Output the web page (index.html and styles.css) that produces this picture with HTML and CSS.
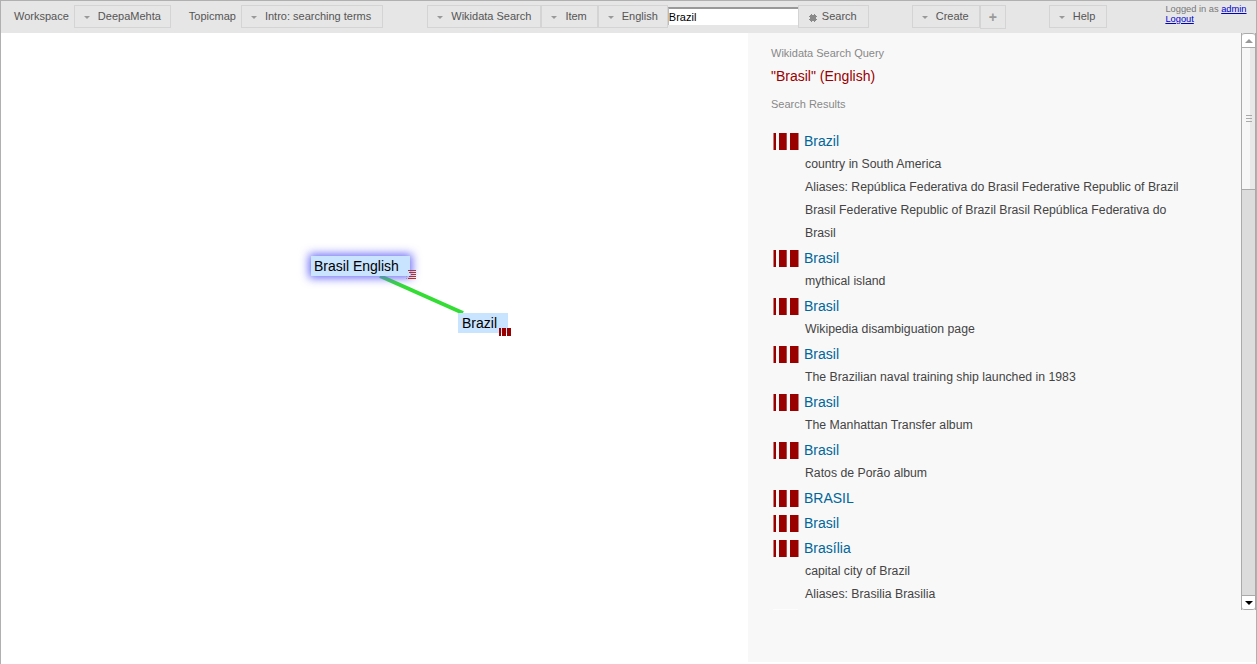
FILE: index.html
```html
<!DOCTYPE html>
<html lang="en">
<head>
  <meta charset="UTF-8">
  <title>DeepaMehta</title>
  <link rel="stylesheet" href="styles.css">
</head>
<body>
  <div class="toolbar">
    <span class="label">Workspace</span>
    <button class="btn menu"><i class="arrow"></i>DeepaMehta</button>
    <span class="label topicmap-label">Topicmap</span>
    <button class="btn menu topicmap-btn"><i class="arrow"></i>Intro: searching terms</button>

    <div class="group search-group">
      <button class="btn menu"><i class="arrow"></i>Wikidata Search</button>
      <button class="btn menu wide"><i class="arrow"></i>Item</button>
      <button class="btn menu"><i class="arrow"></i>English</button>
      <input class="search-input" type="text" value="Brazil">
      <button class="btn search-btn">
        <svg class="gear" viewBox="0 0 8 8"><path d="M2 0h1v1h2V0h1v1h1v1h1v1H7v2h1v1H7v1H6v1H5V7H3v1H2V7H1V6H0V5h1V3H0V2h1V1h1z" fill="#8a8a8a"/></svg>Search
      </button>
    </div>

    <div class="group create-group">
      <button class="btn menu wide"><i class="arrow"></i>Create</button>
      <button class="btn plus">+</button>
    </div>

    <button class="btn menu help-btn"><i class="arrow"></i>Help</button>

    <div class="login">
      <div>Logged in as <a href="#">admin</a></div>
      <div><a href="#">Logout</a></div>
    </div>
  </div>

  <div class="main">
    <div class="canvas">
      <svg class="edges" width="748" height="629"><line x1="380" y1="243" x2="463" y2="280" stroke="#33dd33" stroke-width="4"/></svg>

      <div class="topic selected topic-search">Brasil English</div>
      <svg class="topic-icon flag-icon" viewBox="0 0 11 10">
        <path d="M1 8.5h1M1 6.5h1" stroke="#a99" fill="none"/>
        <path d="M3 .5h8M4 2.5h7M6 4.5h5M4 6.5h7M3 8.5h8" stroke="#b03030" fill="none"/>
      </svg>

      <div class="topic topic-item">Brazil</div>
      <svg class="topic-icon bars-small" viewBox="0 0 12 8"><path d="M0 0h2v8H0zM3 0h4v8H3zM8 0h4v8H8z" fill="#990000"/></svg>
    </div>

    <div class="panel">
      <div class="scroll-box">
        <div class="content">
          <div class="field-label">Wikidata Search Query</div>
          <div class="query-title">"Brasil" (English)</div>
          <div class="field-label results-label">Search Results</div>

          <div class="results">
            <div class="result">
              <div class="result-title"><svg class="bars"><use href="#bars"/></svg><a href="#">Brazil</a></div>
              <div class="result-text">country in South America</div>
              <div class="result-text">Aliases: República Federativa do Brasil Federative Republic of Brazil</div>
              <div class="result-text">Brasil Federative Republic of Brazil Brasil República Federativa do</div>
              <div class="result-text">Brasil</div>
            </div>
            <div class="result">
              <div class="result-title"><svg class="bars"><use href="#bars"/></svg><a href="#">Brasil</a></div>
              <div class="result-text">mythical island</div>
            </div>
            <div class="result">
              <div class="result-title"><svg class="bars"><use href="#bars"/></svg><a href="#">Brasil</a></div>
              <div class="result-text">Wikipedia disambiguation page</div>
            </div>
            <div class="result">
              <div class="result-title"><svg class="bars"><use href="#bars"/></svg><a href="#">Brasil</a></div>
              <div class="result-text">The Brazilian naval training ship launched in 1983</div>
            </div>
            <div class="result">
              <div class="result-title"><svg class="bars"><use href="#bars"/></svg><a href="#">Brasil</a></div>
              <div class="result-text">The Manhattan Transfer album</div>
            </div>
            <div class="result">
              <div class="result-title"><svg class="bars"><use href="#bars"/></svg><a href="#">Brasil</a></div>
              <div class="result-text">Ratos de Porão album</div>
            </div>
            <div class="result">
              <div class="result-title"><svg class="bars"><use href="#bars"/></svg><a href="#">BRASIL</a></div>
            </div>
            <div class="result">
              <div class="result-title"><svg class="bars"><use href="#bars"/></svg><a href="#">Brasil</a></div>
            </div>
            <div class="result">
              <div class="result-title"><svg class="bars"><use href="#bars"/></svg><a href="#">Brasília</a></div>
              <div class="result-text">capital city of Brazil</div>
              <div class="result-text">Aliases: Brasilia Brasilia</div>
            </div>
            <div class="cut-line"></div>
          </div>
        </div>

        <div class="scrollbar">
          <div class="sb-btn sb-btn-top"><i class="sb-up"></i></div>
          <div class="sb-thumb"><i></i><i></i><i></i></div>
          <div class="sb-track"></div>
          <div class="sb-btn sb-btn-bottom"><i class="sb-down"></i></div>
        </div>
      </div>
    </div>
  </div>

  <svg width="0" height="0" class="defs">
    <symbol id="bars" viewBox="0 0 26 17"><path d="M.5 0H3v17H.5zM6 0h7.7v17H6zM17 0h8.5v17H17z" fill="#990000"/></symbol>
  </svg>
</body>
</html>
```

FILE: styles.css
```css
html, body {
  height: 100%;
}

body {
  margin: 0;
  font-family: "Liberation Sans", Arial, sans-serif;
  background-color: #fff;
  border-top: 1px solid #b0b0b0;
  border-left: 1px solid #b0b0b0;
  border-right: 1px solid #b0b0b0;
  box-sizing: border-box;
  overflow: hidden;
}

/* top bar */
.toolbar {
  display: flex;
  align-items: flex-start;
  height: 32px;
  background-color: #e6e6e6;
  padding: 4px 0 0 13px;
  box-sizing: border-box;
  font-size: 11px;
  color: #555;
}

.label {
  line-height: 22px;
  margin-right: 5px;
  color: #555;
}

.topicmap-label {
  margin-left: 18px;
  margin-right: 5px;
}

.group {
  display: flex;
  align-items: flex-start;
}

.search-group {
  margin-left: 44px;
}

.create-group {
  margin-left: 43px;
}

.btn {
  height: 23px;
  padding: 0 10px 2px;
  margin: 0;
  font-family: inherit;
  font-size: 11px;
  color: #555;
  background-color: #e6e6e6;
  border: 1px solid #d4d4d4;
  box-sizing: border-box;
}

.btn.menu {
  padding: 0 9px 2px 9px;
}

.btn.wide {
  padding-right: 10px;
}

.btn.topicmap-btn {
  padding-right: 11px;
}

.btn.help-btn {
  margin-left: 43px;
  padding-right: 11px;
}

.arrow {
  display: inline-block;
  width: 0;
  height: 0;
  margin-right: 8px;
  vertical-align: 1px;
  border-left: 3px solid transparent;
  border-right: 3px solid transparent;
  border-top: 3px solid #999;
}

.search-input {
  width: 130px;
  height: 18px;
  margin-top: 2px;
  padding: 0;
  font-family: inherit;
  font-size: 11px;
  color: #000;
  background-color: #fff;
  border: 0;
  border-top: 2px solid #999;
  border-left: 1px solid #bbb;
  box-sizing: border-box;
}

.btn.search-btn {
  padding: 0 11px 2px 10px;
}

.gear {
  width: 8px;
  height: 8px;
  margin-right: 5px;
  vertical-align: -2px;
}

.btn.plus {
  width: 26px;
  height: 24px;
  padding: 0;
  font-size: 14px;
  font-weight: bold;
  color: #999;
}

.login {
  margin-left: 58px;
  margin-top: -1px;
  font-size: 9.3px;
  line-height: 10px;
  color: #777;
}

.login a {
  color: #00c;
}

/* main area */
.main {
  display: flex;
  height: 631px;
}

.canvas {
  position: relative;
  width: 747px;
  flex-shrink: 0;
  overflow: hidden;
}

.edges {
  position: absolute;
  left: -1px;
  top: 0;
}

.topic {
  position: absolute;
  font-size: 14px;
  line-height: 20px;
  color: #000;
  background-color: #c9e4ff;
  padding: 0 4px;
}

.topic.selected {
  box-shadow: 0 0 10px 2px #6a6af5;
}

.topic-search {
  left: 310px;
  top: 223px;
  width: 99px;
  box-sizing: border-box;
  padding-left: 3px;
  white-space: nowrap;
}

.topic-item {
  left: 457px;
  top: 280px;
  width: 50px;
  box-sizing: border-box;
}

.topic-icon {
  position: absolute;
}

.flag-icon {
  left: 404px;
  top: 237px;
  width: 11px;
  height: 10px;
}

.bars-small {
  left: 498px;
  top: 295px;
  width: 12px;
  height: 8px;
}

.panel {
  flex: 1;
  height: 629px;
  background-color: #f8f8f8;
}

.scroll-box {
  display: flex;
  height: 577px;
  overflow: hidden;
}

.content {
  flex: 1;
  padding: 13px 0 0 23px;
  overflow: hidden;
}

.field-label {
  font-size: 11px;
  line-height: 14px;
  color: #888;
}

.query-title {
  margin-top: 7px;
  font-size: 14px;
  line-height: 18px;
  color: #990000;
}

.results-label {
  margin-top: 12px;
}

.results {
  margin-top: 17px;
}

.result-title {
  display: flex;
  align-items: flex-start;
  height: 25px;
  padding: 2px 0 0 2px;
  box-sizing: border-box;
  font-size: 14px;
  line-height: 23px;
}

.result-title a {
  margin-left: 5px;
  color: #006699;
  text-decoration: none;
}

.bars {
  width: 26px;
  height: 17px;
  margin-top: 3px;
}

.result-text {
  padding-left: 34px;
  font-size: 12.27px;
  line-height: 23px;
  color: #444;
}

.cut-line {
  width: 25px;
  height: 1px;
  margin: 3px 0 0 2px;
  background-color: #fdfdfd;
}

/* scrollbar */
.scrollbar {
  display: flex;
  flex-direction: column;
  width: 15px;
  flex-shrink: 0;
  box-sizing: border-box;
  background-color: #dcdcdc;
  border-left: 1px solid #aaa;
  border-right: 1px solid #aaa;
}

.sb-btn {
  display: flex;
  align-items: center;
  justify-content: center;
  height: 15px;
  flex-shrink: 0;
  background-color: #fff;
  box-sizing: border-box;
}

.sb-btn-top {
  border-top: 1px solid #aaa;
  border-bottom: 1px solid #aaa;
  border-radius: 3px 3px 0 0;
}

.sb-btn-bottom {
  border-top: 1px solid #aaa;
  border-bottom: 1px solid #aaa;
  border-radius: 0 0 3px 3px;
}

.sb-up {
  border-left: 4px solid transparent;
  border-right: 4px solid transparent;
  border-bottom: 4px solid #999;
}

.sb-down {
  border-left: 4px solid transparent;
  border-right: 4px solid transparent;
  border-top: 4px solid #000;
}

.sb-thumb {
  display: flex;
  flex-direction: column;
  align-items: center;
  justify-content: center;
  gap: 2px;
  height: 142px;
  flex-shrink: 0;
  background: linear-gradient(to right, #f7f7f7 60%, #e8e8e8 60%);
  border-bottom: 1px solid #aaa;
  box-sizing: border-box;
}

.sb-thumb i {
  display: block;
  width: 6px;
  height: 1px;
  background-color: #aaa;
}

.sb-track {
  flex: 1;
}

.defs {
  position: absolute;
}
```
